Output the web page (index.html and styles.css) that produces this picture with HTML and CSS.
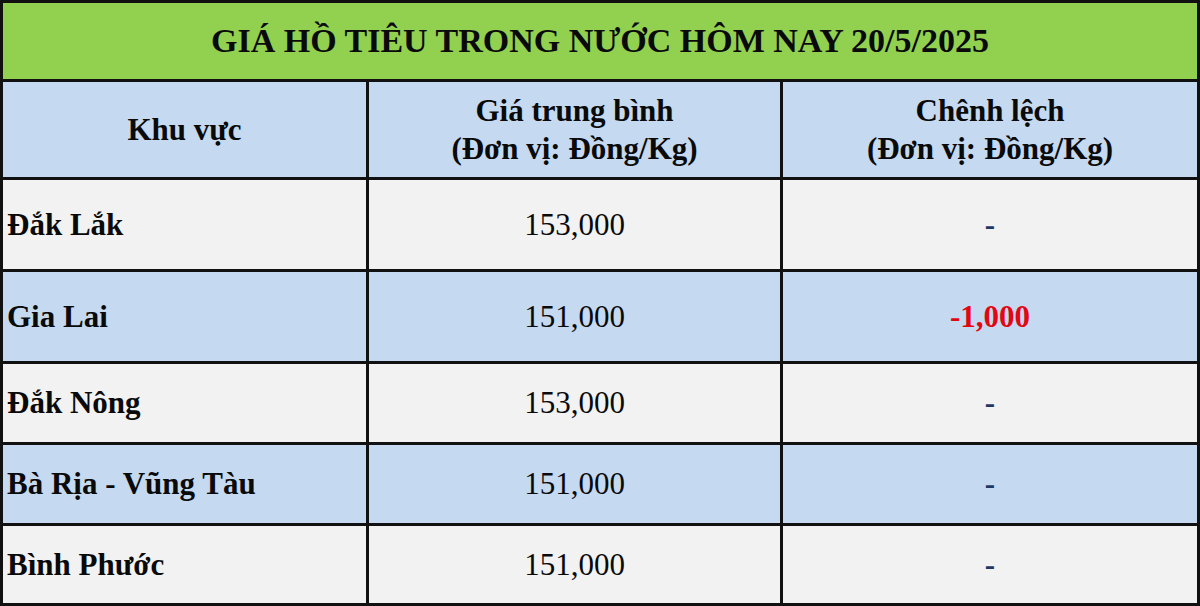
FILE: index.html
```html
<!DOCTYPE html>
<html lang="vi">
<head>
<meta charset="utf-8">
<title>Giá hồ tiêu</title>
<link rel="stylesheet" href="styles.css">
</head>
<body>
<table class="price-table">
  <colgroup>
    <col class="c1"><col class="c2"><col class="c3">
  </colgroup>
  <tr class="title-row"><th colspan="3">GIÁ HỒ TIÊU TRONG NƯỚC HÔM NAY 20/5/2025</th></tr>
  <tr class="head-row">
    <th>Khu vực</th>
    <th>Giá trung bình<br>(Đơn vị: Đồng/Kg)</th>
    <th>Chênh lệch<br>(Đơn vị: Đồng/Kg)</th>
  </tr>
  <tr class="row gray tall"><td class="region">Đắk Lắk</td><td class="price">153,000</td><td class="diff">-</td></tr>
  <tr class="row blue tall"><td class="region">Gia Lai</td><td class="price">151,000</td><td class="diff neg">-1,000</td></tr>
  <tr class="row gray"><td class="region">Đắk Nông</td><td class="price">153,000</td><td class="diff">-</td></tr>
  <tr class="row blue"><td class="region">Bà Rịa - Vũng Tàu</td><td class="price">151,000</td><td class="diff">-</td></tr>
  <tr class="row gray last"><td class="region">Bình Phước</td><td class="price">151,000</td><td class="diff">-</td></tr>
</table>
</body>
</html>
```
FILE: styles.css
```css
html, body {
  margin: 0;
  padding: 0;
  background: #ffffff;
}
.price-table {
  width: 1197px;
  border-collapse: collapse;
  table-layout: fixed;
  font-family: "Liberation Serif", "Times New Roman", serif;
  color: #0a0a0a;
}
.c1 { width: 366px; }
.c2 { width: 414px; }
.c3 { width: 417px; }
.price-table th,
.price-table td {
  border: 3px solid #111111;
  padding: 0;
  vertical-align: middle;
}
.title-row th {
  background: #92d050;
  height: 76px;
  font-size: 34px;
  font-weight: bold;
  text-align: center;
}
.head-row th {
  background: #c5d9f1;
  height: 95px;
  font-size: 31px;
  line-height: 38px;
  font-weight: bold;
  text-align: center;
}
.row td { height: 78px; font-size: 31px; }
.row.tall td { height: 89px; }
.row.last td { height: 77px; }
.gray td { background: #f2f2f2; }
.blue td { background: #c5d9f1; }
.region {
  font-weight: bold;
  text-align: left;
  padding-left: 4px !important;
}
.price {
  text-align: center;
}
.diff {
  text-align: center;
  font-weight: bold;
  color: #1f3864;
}
.diff.neg {
  color: #e30613;
}
```
